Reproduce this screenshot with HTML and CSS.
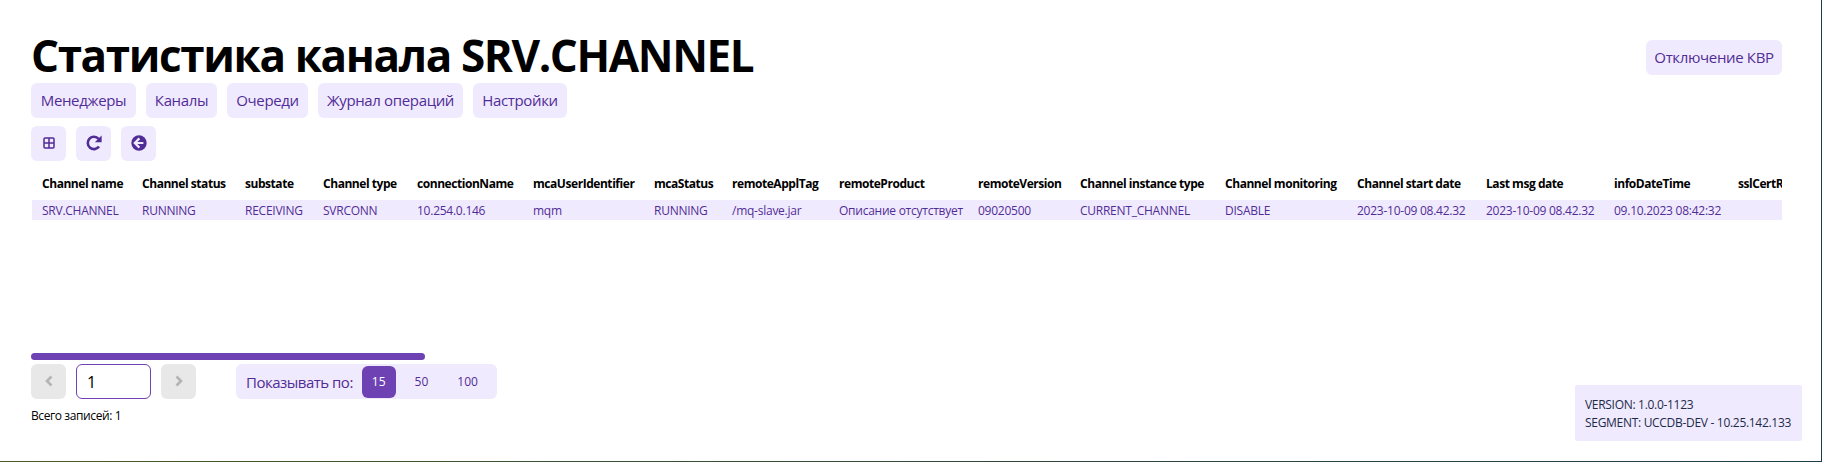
FILE: index.html
```html
<!DOCTYPE html>
<html lang="ru">
<head>
<meta charset="utf-8">
<title>Статистика канала SRV.CHANNEL</title>
<link rel="stylesheet" href="styles.css">
</head>
<body>
<div class="frame">
  <header class="top">
    <div class="top-left">
      <h1 class="title">Статистика канала SRV.CHANNEL</h1>
      <nav class="nav">
        <a class="btn">Менеджеры</a>
        <a class="btn">Каналы</a>
        <a class="btn">Очереди</a>
        <a class="btn">Журнал операций</a>
        <a class="btn">Настройки</a>
      </nav>
    </div>
    <a class="btn kvr">Отключение КВР</a>
  </header>
  <div class="tools">
    <a class="btn icon-btn"><svg width="12" height="12" viewBox="0 0 12 12"><rect x="1" y="1" width="10" height="10" rx="1" fill="none" stroke="#502d96" stroke-width="1.5"/><path d="M6 1v10M1 6h10" stroke="#502d96" stroke-width="1.5"/></svg></a>
    <a class="btn icon-btn"><svg width="18" height="18" viewBox="0 0 18 18"><path d="M14 12.6A6.2 6.2 0 1 1 13.6 4.800" fill="none" stroke="#502d96" stroke-width="2.600"/><path d="M16.600 1.400v6.800h-6.800z" fill="#502d96"/></svg></a>
    <a class="btn icon-btn"><svg width="16" height="16" viewBox="0 0 16 16"><circle cx="8" cy="8" r="7.700" fill="#502d96"/><path d="M8.400 3.400L3.800 8l4.600 4.600M4.400 8h8" fill="none" stroke="#f0eafe" stroke-width="2.200"/></svg></a>
  </div>
  <div class="table-wrap">
    <table class="table">
      <colgroup>
        <col class="c1"><col class="c2"><col class="c3"><col class="c4"><col class="c5"><col class="c6"><col class="c7"><col class="c8"><col class="c9"><col class="c10"><col class="c11"><col class="c12"><col class="c13"><col class="c14"><col class="c15"><col class="c16">
      </colgroup>
      <thead>
        <tr>
          <th>Channel name</th><th>Channel status</th><th>substate</th><th>Channel type</th><th>connectionName</th><th>mcaUserIdentifier</th><th>mcaStatus</th><th>remoteApplTag</th><th>remoteProduct</th><th>remoteVersion</th><th>Channel instance type</th><th>Channel monitoring</th><th>Channel start date</th><th>Last msg date</th><th>infoDateTime</th><th>sslCertRemoteIssuer</th>
        </tr>
      </thead>
      <tbody>
        <tr>
          <td>SRV.CHANNEL</td><td>RUNNING</td><td>RECEIVING</td><td>SVRCONN</td><td>10.254.0.146</td><td>mqm</td><td>RUNNING</td><td>/mq-slave.jar</td><td>Описание отсутствует</td><td>09020500</td><td>CURRENT_CHANNEL</td><td>DISABLE</td><td>2023-10-09 08.42.32</td><td>2023-10-09 08.42.32</td><td>09.10.2023 08:42:32</td><td></td>
        </tr>
      </tbody>
    </table>
  </div>
  <div class="scrollbar"><div class="thumb"></div></div>
  <footer class="bottom">
    <div class="pager-block">
      <div class="pager">
        <a class="btn pg-btn"><svg width="10" height="14" viewBox="0 0 10 14"><path d="M7.500 2.500L3 7l4.500 4.500" fill="none" stroke="#b4b4b4" stroke-width="2.600"/></svg></a>
        <input class="pg-input" value="1">
        <a class="btn pg-btn"><svg width="10" height="14" viewBox="0 0 10 14"><path d="M2.500 2.500L7 7l-4.500 4.500" fill="none" stroke="#b4b4b4" stroke-width="2.600"/></svg></a>
        <div class="sizes">
          <span class="sizes-label">Показывать по:</span>
          <a class="size active">15</a>
          <a class="size">50</a>
          <a class="size">100</a>
        </div>
      </div>
      <div class="total">Всего записей: 1</div>
    </div>
    <div class="version">VERSION: 1.0.0-1123<br>SEGMENT: UCCDB-DEV - 10.25.142.133</div>
  </footer>
</div>
</body>
</html>
```
FILE: styles.css
```css
* { box-sizing: border-box; }
html, body { margin: 0; padding: 0; background: #fff; }
body { font-family: "Open Sans", "Noto Sans", sans-serif; color: #000; }
.frame {
  width: 1822px;
  height: 462px;
  border-right: 1px solid #1d3d48;
  border-bottom: 1px solid;
  border-image: linear-gradient(90deg, #4a5a2a, #1d3d48) 1;
  padding: 27px 19px 0 31px;
  display: flex;
  flex-direction: column;
  overflow: hidden;
}
.top { display: flex; justify-content: space-between; align-items: flex-start; margin-right: 20px; }
.top-left { display: flex; flex-direction: column; }
.title { margin: 0; font-size: 44px; line-height: 56px; font-weight: 700; letter-spacing: -1.38px; white-space: nowrap; }
.nav { display: grid; grid-template-columns: 105px 71px 81px 145px 94px; gap: 10px; justify-content: start; }
.btn {
  display: flex; align-items: center; justify-content: center;
  height: 35px; padding-bottom: 1px; border-radius: 6px;
  background: #f0eafe; color: #502d96; font-size: 15px; letter-spacing: -0.35px; white-space: nowrap;
}
.kvr { width: 136px; margin-top: 13px; }
.tools { display: flex; gap: 10px; margin-top: 8px; }
.icon-btn { width: 35px; }
.table-wrap { margin-top: 5px; margin-left: 1px; height: 187px; overflow: hidden; width: 1750px; }
.table { border-collapse: collapse; table-layout: fixed; width: 1860px; font-size: 12px; letter-spacing: -0.25px; white-space: nowrap; }
.table th { height: 34px; padding: 0 10px; text-align: left; font-weight: 700; color: #000; letter-spacing: -0.45px; overflow: hidden; }
.table td { height: 20px; padding: 0 10px; background: #f0eafe; color: #502d96; overflow: hidden; }
.c1 { width: 100px; } .c2 { width: 103px; } .c3 { width: 78px; } .c4 { width: 94px; }
.c5 { width: 116px; } .c6 { width: 121px; } .c7 { width: 78px; } .c8 { width: 107px; }
.c9 { width: 139px; } .c10 { width: 102px; } .c11 { width: 145px; } .c12 { width: 132px; }
.c13 { width: 129px; } .c14 { width: 128px; } .c15 { width: 124px; } .c16 { width: 164px; }
.scrollbar { height: 7px; }
.thumb { width: 394px; height: 7px; border-radius: 4px; background: #6f42b4; }
.bottom { display: flex; justify-content: space-between; align-items: flex-start; margin-top: 4px; }
.pager { display: flex; height: 35px; }
.pg-btn { width: 35px; background: #e8e8e8; }
.pg-input {
  width: 75px; height: 35px; margin: 0 10px; padding: 0 10px; border: 1px solid #6f42b4; border-radius: 6px;
  font: 16px "Open Sans", sans-serif; color: #000; background: #fff; outline: none;
}
.sizes { display: flex; align-items: center; gap: 9px; margin-left: 40px; padding-left: 10px; width: 261px; height: 35px; border-radius: 6px; background: #f0eafe; color: #502d96; }
.sizes-label { font-size: 15px; letter-spacing: -0.5px; white-space: nowrap; }
.size { display: flex; align-items: center; height: 32px; padding: 0 10px; border-radius: 6px; font-size: 12px; }
.size.active { background: #6f42b4; color: #fff; }
.total { margin-top: 9px; font-size: 12px; letter-spacing: -0.4px; line-height: 16px; }
.version {
  width: 227px; height: 56px; margin-top: 21px; padding: 11px 10px 0; border-radius: 2px; background: #f0eafe; color: #1c2a4a;
  font-size: 12px; letter-spacing: -0.3px; line-height: 18px; white-space: nowrap;
}
```
